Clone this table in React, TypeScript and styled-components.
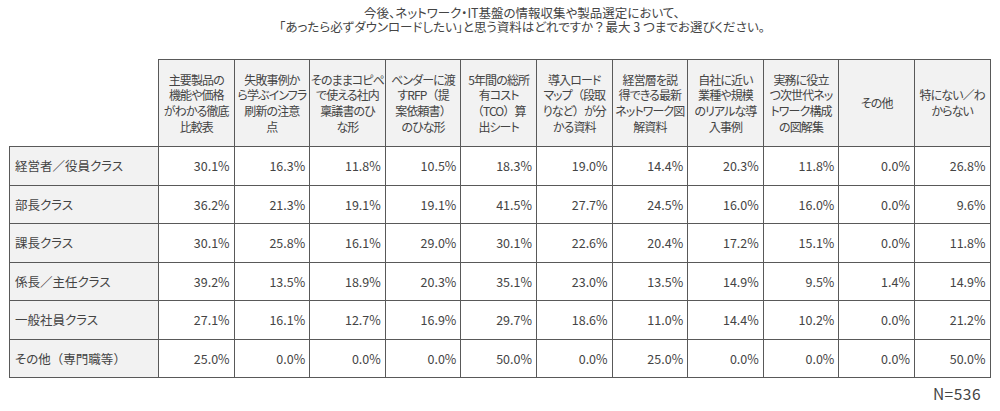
import React from 'react'
import styled, { createGlobalStyle } from 'styled-components'

const headers: string[][] = [
  ['主要製品の', '機能や価格', 'がわかる徹底', '比較表'],
  ['失敗事例か', 'ら学ぶインフラ', '刷新の注意', '点'],
  ['そのままコピペ', 'で使える社内', '稟議書のひ', 'な形'],
  ['ベンダーに渡', 'すRFP（提', '案依頼書）', 'のひな形'],
  ['5年間の総所', '有コスト', '（TCO）算', '出シート'],
  ['導入ロード', 'マップ（段取', 'りなど）が分', 'かる資料'],
  ['経営層を説', '得できる最新', 'ネットワーク図', '解資料'],
  ['自社に近い', '業種や規模', 'のリアルな導', '入事例'],
  ['実務に役立', 'つ次世代ネッ', 'トワーク構成', 'の図解集'],
  ['その他'],
  ['特にない／わ', 'からない'],
]

const rows: { label: string; values: string[] }[] = [
  { label: '経営者／役員クラス', values: ['30.1%', '16.3%', '11.8%', '10.5%', '18.3%', '19.0%', '14.4%', '20.3%', '11.8%', '0.0%', '26.8%'] },
  { label: '部長クラス', values: ['36.2%', '21.3%', '19.1%', '19.1%', '41.5%', '27.7%', '24.5%', '16.0%', '16.0%', '0.0%', '9.6%'] },
  { label: '課長クラス', values: ['30.1%', '25.8%', '16.1%', '29.0%', '30.1%', '22.6%', '20.4%', '17.2%', '15.1%', '0.0%', '11.8%'] },
  { label: '係長／主任クラス', values: ['39.2%', '13.5%', '18.9%', '20.3%', '35.1%', '23.0%', '13.5%', '14.9%', '9.5%', '1.4%', '14.9%'] },
  { label: '一般社員クラス', values: ['27.1%', '16.1%', '12.7%', '16.9%', '29.7%', '18.6%', '11.0%', '14.4%', '10.2%', '0.0%', '21.2%'] },
  { label: 'その他（専門職等）', values: ['25.0%', '0.0%', '0.0%', '0.0%', '50.0%', '0.0%', '25.0%', '0.0%', '0.0%', '0.0%', '50.0%'] },
]

// full-width brackets and slashes keep their full width, kana get proportional widths
const withWide = (text: string) =>
  text.split(/([（）／？])/).map((part, i) =>
    /^[（）／？]$/.test(part) ? <Wide key={i}>{part}</Wide> : part
  )

const App: React.FC = () => {
  return (
    <Page>
      <GlobalStyle />
      <Title>
        <TitleLine>今後、ネットワーク・IT基盤の情報収集や製品選定において、</TitleLine>
        <TitleLine>{withWide('「あったら必ずダウンロードしたい」と思う資料はどれですか？最大 3 つまでお選びください。')}</TitleLine>
      </Title>
      <Table>
        <colgroup>
          <LabelCol />
          {headers.map((_, i) => (
            <DataCol key={i} />
          ))}
        </colgroup>
        <thead>
          <tr>
            <Corner />
            {headers.map((lines, i) => (
              <HeadCell key={i}>
                {lines.map((line, j) => (
                  <HeadLine key={j}>{withWide(line)}</HeadLine>
                ))}
              </HeadCell>
            ))}
          </tr>
        </thead>
        <tbody>
          {rows.map((row) => (
            <tr key={row.label}>
              <LabelCell>{withWide(row.label)}</LabelCell>
              {row.values.map((v, i) => (
                <ValueCell key={i}>{v}</ValueCell>
              ))}
            </tr>
          ))}
        </tbody>
      </Table>
      <Footer>N=536</Footer>
    </Page>
  )
}

export default App

const GlobalStyle = createGlobalStyle`
  html, body {
    margin: 0;
    padding: 0;
    background: #fff;
  }
  body {
    font-family: "Noto Sans CJK JP", "Noto Sans", sans-serif;
    color: #444;
    font-feature-settings: "palt";
  }
`

const Wide = styled.span`
  font-feature-settings: normal;
`

const Page = styled.div`
  width: 1000px;
  height: 411px;
  padding: 6px 0 0 9px;
  box-sizing: border-box;
`

const Title = styled.div`
  padding-left: 35px;
  text-align: center;
  font-size: 12.5px;
  line-height: 14px;
`

const TitleLine = styled.div``

const Table = styled.table`
  margin-top: 25px;
  width: 981px;
  table-layout: fixed;
  border-collapse: collapse;
  font-size: 12.5px;
  color: #444;
`

const LabelCol = styled.col`
  width: 149px;
`

const DataCol = styled.col`
  width: 75.6px;
`

const Corner = styled.th`
  border: none;
  padding: 0;
`

const HeadCell = styled.th`
  height: 86px;
  padding: 0;
  border: 1px solid #595959;
  background: #f2f2f2;
  font-size: 12px;
  font-weight: normal;
  text-align: center;
  vertical-align: middle;
  line-height: 15.7px;
`

const HeadLine = styled.div`
  white-space: nowrap;
  letter-spacing: -0.9px;
`

const LabelCell = styled.td`
  height: 37.5px;
  padding: 0 0 0 5px;
  border: 1px solid #595959;
  background: #f2f2f2;
  text-align: left;
  white-space: nowrap;
`

const ValueCell = styled.td`
  padding: 0 4px 0 0;
  border: 1px solid #595959;
  background: #fff;
  text-align: right;
`

const Footer = styled.div`
  width: 972px;
  margin-top: 6px;
  text-align: right;
  font-size: 15.5px;
  line-height: 18px;
  letter-spacing: 0.5px;
`
